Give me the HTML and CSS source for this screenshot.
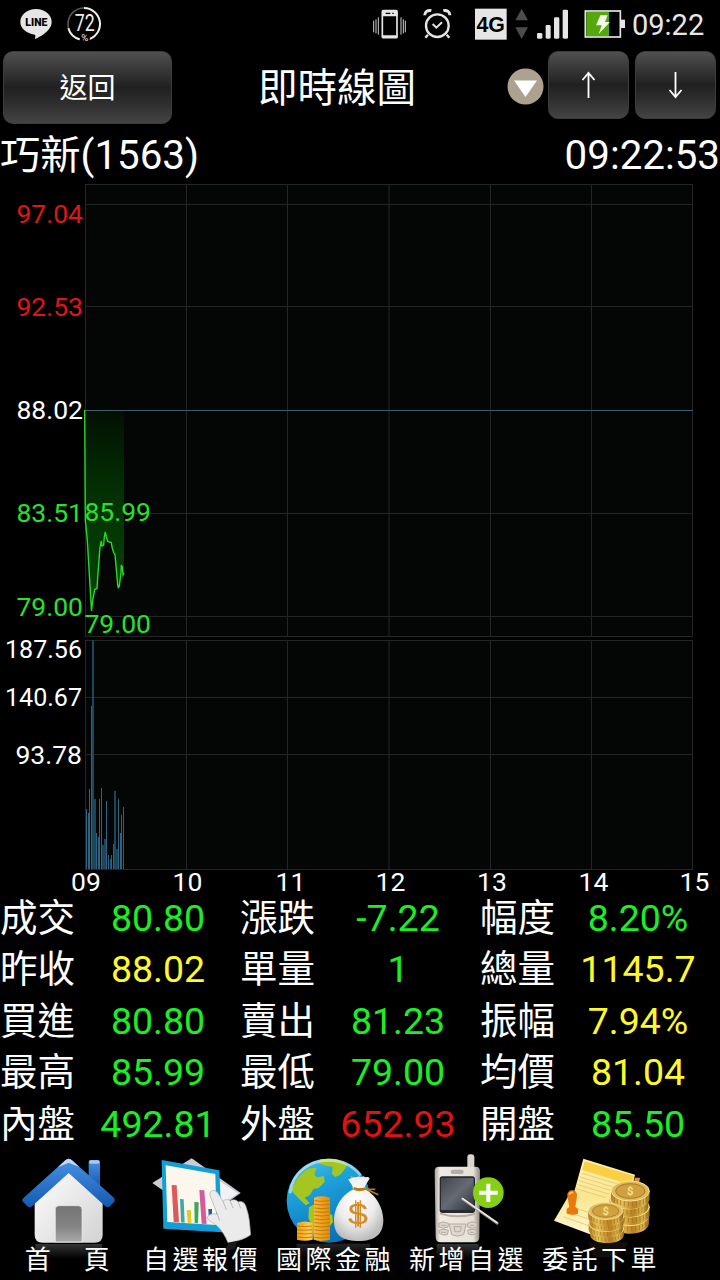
FILE: index.html
```
<!DOCTYPE html>
<html lang="zh-TW">
<head>
  <meta charset="UTF-8">
  <meta name="viewport" content="width=device-width, initial-scale=1.0">
  <title>即時線圖</title>
  <link rel="stylesheet" href="styles.css">
</head>
<body>

  <!-- Status bar -->
  <div class="status-bar">
    <svg class="line-icon" width="32" height="52" viewBox="60 0 96 156">
      <path d="M108 27C82 27 61 44 61 66c0 20 18 34 43 38 3 1 2 5 1 13 14-5 50-25 50-51 0-22-21-39-47-39z" fill="#e6e6e6"/>
      <text x="109" y="79" textLength="66" lengthAdjust="spacingAndGlyphs" class="line-text">LINE</text>
    </svg>
    <svg width="34" height="52" viewBox="201 0 102 156">
      <circle cx="252" cy="72" r="48" fill="none" stroke="#555" stroke-width="5"/>
      <path d="M252 24A48 48 0 0 1 270 116.500M239 118A48 48 0 0 1 205 85" fill="none" stroke="#eee" stroke-width="6"/>
      <rect x="240" y="98" width="28" height="26" fill="#000"/>
      <text x="254" y="94" textLength="60" lengthAdjust="spacingAndGlyphs" class="percent-num">72</text>
      <text x="254" y="122" class="percent-sign">%</text>
    </svg>
    <div class="status-right">
      <svg width="35" height="52" viewBox="36 0 105 156">
        <rect x="67" y="32" width="44" height="81" rx="3" fill="none" stroke="#e6e6e6" stroke-width="5"/>
        <path d="M66 31h46v18H66zM66 106h46v8H66z" fill="#e6e6e6"/>
        <path d="M77 40h14M97 40h4" stroke="#000" stroke-width="4"/>
        <path d="M41 62v35M55 52v52M123 52v52M136 62v35M48 58v42M130 58v42" stroke="#ccc" stroke-width="3"/>
      </svg>
      <svg class="alarm" width="29" height="52" viewBox="189 0 87 156" fill="none" stroke="#e6e6e6">
        <circle cx="232" cy="77" r="34" stroke-width="7"/>
        <path d="M218 72l11 11 17-16" stroke-width="6"/>
        <path d="M194 46c0-10 9-17 20-14M270 46c0-10-9-17-20-14" stroke-width="9"/>
        <path d="M204 104l-8 9M260 104l8 9" stroke-width="7"/>
      </svg>
      <svg class="net" width="34" height="52" viewBox="342 0 102 156">
        <rect x="345" y="26" width="95" height="93" fill="#e6e6e6"/>
        <text x="392" y="96" class="net-text">4G</text>
      </svg>
      <svg class="updown" width="14" height="52" viewBox="465 0 42 156">
        <path d="M485 26l19 35h-38zM485 117l19-35h-38z" fill="#4c4c4c"/>
      </svg>
      <svg class="signal" width="34" height="52" viewBox="528 0 102 156" fill="#e6e6e6">
        <rect x="531" y="99" width="16" height="17" rx="4"/>
        <rect x="557" y="75" width="15" height="41" rx="4"/>
        <rect x="582" y="52" width="16" height="64" rx="4"/>
        <rect x="608" y="29" width="16" height="87" rx="4"/>
      </svg>
      <svg class="battery" width="43" height="52" viewBox="672 0 129 156">
        <rect x="676" y="33" width="105" height="78" fill="#000" stroke="#e6e6e6" stroke-width="5"/>
        <rect x="679" y="36" width="68" height="72" fill="#55a80b"/>
        <rect x="783" y="59" width="12" height="25" fill="#e6e6e6"/>
        <path d="M721 46h22l-8 20h15l-34 36 9-26h-17z" fill="#f4f8ea"/>
      </svg>
      <span class="clock">09:22</span>
    </div>
  </div>

  <!-- Header -->
  <div class="header">
    <button class="btn back">返回</button>
    <h1>即時線圖</h1>
    <svg class="dropdown" width="37" height="37" viewBox="0 0 37 37">
      <circle cx="18.500" cy="18.500" r="18" fill="#ada18f"/>
      <path d="M7 12.500h23L18.500 29z" fill="#fff"/>
    </svg>
    <button class="btn arrow">
      <svg width="16" height="28" viewBox="0 0 16 28"><path d="M7.500 27V2M1.500 9l6-7 6 7"/></svg>
    </button>
    <button class="btn arrow">
      <svg width="16" height="28" viewBox="0 0 16 28"><path d="M7.500 1v25M1.500 19l6 7 6-7"/></svg>
    </button>
  </div>

  <div class="quote">
    <span>巧新(1563)</span>
    <span>09:22:53</span>
  </div>

  <!-- Price and volume chart -->
  <svg class="chart" width="720" height="713" viewBox="0 182 720 713">
    <defs>
      <linearGradient id="drop" gradientUnits="userSpaceOnUse" x1="0" y1="410" x2="0" y2="610">
        <stop offset="0" stop-color="#021002"/>
        <stop offset="0.400" stop-color="#033003"/>
        <stop offset="1" stop-color="#044504"/>
      </linearGradient>
    </defs>
    <rect x="85" y="184" width="608" height="453" fill="#040605"/>
    <rect x="85" y="640" width="608" height="230" fill="#040605"/>
    <path class="grid" d="M85 184.500h608M85 204.500h608M85 306.500h608M85 513.500h608M85 616.500h608M85 636.500h608M85 640.500h608M85 697.500h608M85 754.500h608M85 869.500h608"/>
    <path class="grid" d="M85.500 184v453M186.500 184v453M287.500 184v453M389 184v453M490.500 184v453M591.500 184v453M692.500 184v453"/>
    <path class="grid" d="M85.500 640v230M186.500 640v230M287.500 640v230M389 640v230M490.500 640v230M591.500 640v230M692.500 640v230"/>

    <path d="M85 410L85.300 520 87.300 540 91.500 611 92.700 600 94.700 589.500 97 588.500 98 573 100 547 101.300 541 102 546 103.700 545 104.300 537 105.300 532 106.300 537 107.700 541.500 111.300 542.500 112 547 113.700 552.500 115 555 117.700 585 118.300 587.500 119.300 586.500 120.300 578 121 573 121.300 565 122.300 567 123 575 124 573V410z" fill="url(#drop)"/>
    <path d="M85 410.500h608" stroke="#435f6f"/>
    <path class="price" d="M84.700 410L85.300 520 87.300 540 91.500 611 92.700 600 94.700 589.500 97 588.500 98 573 100 547 101.300 541 102 546 103.700 545 104.300 537 105.300 532 106.300 537 107.700 541.500 111.300 542.500 112 547 113.700 552.500 115 555 117.700 585 118.300 587.500 119.300 586.500 120.300 578 121 573 121.300 565 122.300 567 123 575 124 573"/>

    <path class="bars" d="M86.500 869V809M88.500 869V813M89.500 869V789M91.500 869V706M96.500 869V833M98.500 869V837M99.500 869V799M101.500 869V788M106.500 869V801M108.500 869V855M110.700 869V859M111.500 869V855M113.500 869V844M118.500 869V799M120.500 869V833M121.500 869V815M123.500 869V807"/>
    <path class="bars wide" d="M93 869V640M95 869V799M103 869V845M105 869V839M115 869V791M117 869V849"/>

    <g class="axis">
      <text class="red" x="83" y="222.500">97.04</text>
      <text class="red" x="83" y="315.500">92.53</text>
      <text x="83" y="419">88.02</text>
      <text class="green" x="83" y="522">83.51</text>
      <text class="green" x="83" y="616">79.00</text>
      <text x="82" y="658" textLength="77" lengthAdjust="spacingAndGlyphs">187.56</text>
      <text x="82" y="706" textLength="77" lengthAdjust="spacingAndGlyphs">140.67</text>
      <text x="82" y="764">93.78</text>
      <text class="green" x="151" y="521">85.99</text>
      <text class="green" x="151" y="633">79.00</text>
    </g>
    <g class="hours">
      <text x="86" y="891">09</text>
      <text x="187.500" y="891">10</text>
      <text x="290.500" y="891">11</text>
      <text x="390.500" y="891">12</text>
      <text x="492" y="891">13</text>
      <text x="593.500" y="891">14</text>
      <text x="694.500" y="891">15</text>
    </g>
  </svg>

  <!-- Quote details -->
  <div class="details">
    <div><label>成交</label><span class="green">80.80</span></div>
    <div><label>漲跌</label><span class="green">-7.22</span></div>
    <div><label>幅度</label><span class="green">8.20%</span></div>
    <div><label>昨收</label><span class="yellow">88.02</span></div>
    <div><label>單量</label><span class="green">1</span></div>
    <div><label>總量</label><span class="yellow">1145.7</span></div>
    <div><label>買進</label><span class="green">80.80</span></div>
    <div><label>賣出</label><span class="green">81.23</span></div>
    <div><label>振幅</label><span class="yellow">7.94%</span></div>
    <div><label>最高</label><span class="green">85.99</span></div>
    <div><label>最低</label><span class="green">79.00</span></div>
    <div><label>均價</label><span class="yellow">81.04</span></div>
    <div><label>內盤</label><span class="green">492.81</span></div>
    <div><label>外盤</label><span class="red">652.93</span></div>
    <div><label>開盤</label><span class="green">85.50</span></div>
  </div>

  <!-- Bottom menu -->
  <div class="menu">
    <div class="item">
      <svg width="133" height="94" viewBox="3 15 399 282">
        <defs>
          <linearGradient id="wall" x1="0" y1="0" x2="1" y2="1"><stop offset="0" stop-color="#fff"/><stop offset="1" stop-color="#d2d2d2"/></linearGradient>
          <linearGradient id="roof" x1="0" y1="0" x2="0" y2="1"><stop offset="0" stop-color="#4a92e6"/><stop offset="1" stop-color="#1259b0"/></linearGradient>
          <linearGradient id="door" x1="0" y1="0" x2="0" y2="1"><stop offset="0" stop-color="#747474"/><stop offset="0.600" stop-color="#858585"/><stop offset="1" stop-color="#aaa"/></linearGradient>
          <linearGradient id="shade" x1="0" y1="0" x2="0" y2="1"><stop offset="0" stop-color="#343434"/><stop offset="1" stop-color="#000"/></linearGradient>
        </defs>
        <path d="M106 297h200v45H106z" fill="url(#shade)"/>
        <path d="M266 52q0-7 7-7h20q7 0 7 7v74l-34-30z" fill="url(#roof)"/>
        <path d="M267 52q0-6 6-6h20q6 0 6 6l-4 4h-24z" fill="#a9c9f2"/>
        <path d="M104 160L206 72l102 88v110q0 23-24 23H128q-24 0-24-23z" fill="url(#wall)"/>
        <path d="M206 41q5 0 10 5l124 111q7 7 2 14l-12 13q-7 6-14 0L206 84 96 184q-7 6-14 0l-13-14q-5-6 2-12L196 46q5-5 10-5z" fill="url(#roof)"/>
        <path d="M206 41q5 0 10 5l22 20-32-13-32 14 22-21q5-5 10-5z" fill="#c3d9f5"/>
        <path d="M166 291v-98q0-11 11-11h58q11 0 11 11v98z" fill="url(#door)" stroke="#eee" stroke-width="2"/>
      </svg>
      <span>首　頁</span>
    </div>
    <div class="item">
      <svg width="133" height="94" viewBox="402 15 399 282">
        <path d="M575 40L722 144 612 222 457 114z" fill="#c9ccd4"/>
        <path d="M640 96l74 49-64 42z" fill="#f2f2f5"/>
        <path d="M485 45L658 76 666 262 490 251z" fill="#139fd6"/>
        <path d="M497 61L646 87 650 240 502 231z" fill="#fbf7ec"/>
        <path d="M515 120l15 1 7 111-16-1z" fill="#dd5a58"/>
        <path d="M540 162l11 1 3 70-11-1z" fill="#3aa9a9"/>
        <path d="M560 195l13 1 1 38-11-1z" fill="#e3cb27"/>
        <path d="M583 171l13 1-2 63-10-1z" fill="#38a85b"/>
        <path d="M598 135l15 1 7 101-15-1z" fill="#d45a9e"/>
        <path d="M625 192h11v22h-10z" fill="#245bb0"/>
        <path d="M684 293c34-5 55-14 68-24-3-28-3-54-13-80-3-18-17-23-24-18-6-8-17-8-24-4-8-5-17-4-22 2l-15-24c-10-14-27-10-24 6l22 57c-13-4-27 0-30 10 3 11 17 14 29 24 15 14 24 30 33 51z" fill="#ebebeb" stroke="#aaa" stroke-width="2"/>
        <path d="M669 169l10 25M691 168l8 21M715 172l7 18M652 208l7 19" fill="none" stroke="#bbb" stroke-width="3"/>
        <path d="M684 293l28-5-8 25-28 5z" fill="#191919"/>
      </svg>
      <span>自選報價</span>
    </div>
    <div class="item">
      <svg width="133" height="94" viewBox="-9 15 399 282">
        <defs>
          <linearGradient id="sea" x1="0" y1="0" x2="0.400" y2="1"><stop offset="0" stop-color="#5cc3e6"/><stop offset="0.350" stop-color="#20a5dc"/><stop offset="1" stop-color="#0873ba"/></linearGradient>
          <linearGradient id="gold" x1="0" y1="0" x2="1" y2="0"><stop offset="0" stop-color="#ee9d0c"/><stop offset="0.350" stop-color="#ffc94c"/><stop offset="1" stop-color="#e48a04"/></linearGradient>
          <radialGradient id="sack" cx="0.450" cy="0.350" r="0.650"><stop offset="0" stop-color="#fff"/><stop offset="0.600" stop-color="#ececec"/><stop offset="1" stop-color="#bdbdbd"/></radialGradient>
        </defs>
        <path d="M80 296h220v42H80z" fill="url(#shade)" opacity="0.700"/>
        <circle cx="176" cy="167" r="126" fill="url(#sea)"/>
        <path d="M64 138C74 104 96 80 119 70l20-2-6 21 9 8 20-4 2 18-17 17-17 4-10 18-16 8 15 16-12 7-20-20-16-16-13-17zM150 44c30-6 62-2 82 16l-10 16-12 14-14 6-10-8 2-22-20-4-20-6zM117 187l16-9 28 15 26 18 2 20-20 26-14 31-23-8-8-40-9-21zM242 93l26 9 29 38 2 50-27-18-24-40z" fill="#a5c520"/>
        <path d="M60 145C67 82 118 46 176 46c39 0 73 16 96 45" fill="none" stroke="#e8fbff" stroke-width="9" opacity="0.550"/>
        <path d="M81 234q23-9 47 0v50q-23 6-47 0zM132 158q23-8 48 0v126q-23 6-48 0z" fill="url(#gold)"/>
        <path d="M82 243q22 4 45 0M82 254q22 4 45 0M82 265q22 4 45 0M82 276q22 4 45 0M133 167q23 4 46 0M133 178q23 4 46 0M133 189q23 4 46 0M133 200q23 4 46 0M133 211q23 4 46 0M133 222q23 4 46 0M133 233q23 4 46 0M133 244q23 4 46 0M133 255q23 4 46 0M133 266q23 4 46 0M133 277q23 4 46 0" fill="none" stroke="#b57408" stroke-width="2.500"/>
        <path d="M252 133c-5-15-14-21-17-31 8 0 14-6 24-5 8-6 15 2 22-3 7 6 12-2 18 6-4 10-14 19-16 33 31 12 57 54 57 92 0 46-30 63-73 63-45 0-75-14-75-61 0-41 27-82 60-94z" fill="url(#sack)"/>
        <path d="M251 132q18 8 36 0l38 17M286 132l30 1M252 128q18 7 34 1" fill="none" stroke="#b67b22" stroke-width="5"/>
        <text x="264" y="238" textLength="60" lengthAdjust="spacingAndGlyphs" class="dollar">$</text>
        <path d="M257 166v82M271 166v82" stroke="#d88b25" stroke-width="4"/>
      </svg>
      <span>國際金融</span>
    </div>
    <div class="item">
      <svg width="133" height="94" viewBox="390 15 399 282">
        <defs>
          <linearGradient id="shell" x1="0" y1="0" x2="1" y2="0"><stop offset="0" stop-color="#aaa497"/><stop offset="0.120" stop-color="#efece4"/><stop offset="0.850" stop-color="#e6e1d7"/><stop offset="1" stop-color="#8d8880"/></linearGradient>
          <linearGradient id="screen" x1="0" y1="0" x2="1" y2="1"><stop offset="0" stop-color="#42454c"/><stop offset="0.500" stop-color="#666a74"/><stop offset="1" stop-color="#2c2f36"/></linearGradient>
        </defs>
        <path d="M500 297h126v45H500z" fill="url(#shade)"/>
        <rect x="592" y="28" width="21" height="60" rx="9" fill="#d9d5cc"/>
        <path d="M494 78q0-13 14-13h108q14 0 14 13l-2 197q0 17-16 17H512q-15 0-15-17z" fill="url(#shell)"/>
        <rect x="542" y="74" width="39" height="13" rx="6" fill="#b4afa5"/>
        <rect x="509" y="94" width="106" height="110" rx="8" fill="#28292d"/>
        <rect x="513" y="99" width="98" height="96" rx="3" fill="url(#screen)"/>
        <path d="M510 206q52 16 106 0" fill="none" stroke="#b8afa3" stroke-width="6"/>
        <path d="M506 235q14-9 29 0l-1 11q-14 7-27 0zM592 235q14-9 29 0l-1 11q-14 7-27 0zM507 256q14-7 28 0l-3 13q-14 4-24-4zM593 256q14-7 27 0l-2 10q-13 6-23 1zM537 237h51l-7 32q-19 9-36 0z" fill="#ddd7cc" stroke="#b3aba0" stroke-width="3"/>
        <path d="M552 245h22l-3 15h-16zM514 241h14M600 241h14M514 262h14M600 262h12" fill="none" stroke="#b3aba0" stroke-width="3"/>
        <circle cx="655" cy="143" r="46" fill="#85d016"/>
        <path d="M655 116v55M627 143.500h56" stroke="#fff" stroke-width="12"/>
        <path d="M577 162L682 235" stroke="#8f8a82" stroke-width="8" stroke-linecap="round"/>
        <path d="M578 161L681 233" stroke="#eeebe3" stroke-width="5" stroke-linecap="round"/>
      </svg>
      <span>新增自選</span>
    </div>
    <div class="item">
      <svg width="133" height="94" viewBox="99 15 399 282">
        <defs>
          <linearGradient id="paper" x1="0" y1="0" x2="0" y2="1"><stop offset="0" stop-color="#fff1ad"/><stop offset="0.500" stop-color="#fae691"/><stop offset="1" stop-color="#fff7cf"/></linearGradient>
          <linearGradient id="coin" x1="0" y1="0" x2="1" y2="0"><stop offset="0" stop-color="#b47b1a"/><stop offset="0.250" stop-color="#e9c65c"/><stop offset="0.600" stop-color="#b98222"/><stop offset="0.850" stop-color="#dcb750"/><stop offset="1" stop-color="#8e5f12"/></linearGradient>
          <!-- one coin of a stack: edge, rim and top face -->
          <g id="gold-coin">
            <path d="M-58 0v21c0 44 116 44 116 0V0z" fill="url(#coin)"/>
            <path d="M-48 18v17M-39 23v17M-29 27v17M-18 29v17M-6 30v17M6 30v17M18 29v17M29 27v17M39 23v17M48 18v17" stroke="#a06d1a" stroke-width="2"/>
            <ellipse rx="57" ry="30" fill="#dfba58" stroke="#f6e09a" stroke-width="3"/>
            <ellipse rx="44" ry="22" fill="#cfa141" stroke="#a97b26" stroke-width="3"/>
          </g>
        </defs>
        <path d="M265 292h120q-20 42-60 45h-45z" fill="#120f0a"/>
        <path d="M250 41L405 89 370 240 270 268 162 227 204 155 223 139z" fill="url(#paper)"/>
        <path d="M254 49L402 93 391 119 247 75z" fill="#fbcf43"/>
        <path d="M246 85L360 119M241 96L345 128M238 107L332 136M233 119L326 147M228 131L318 158M213 184l58 20M205 202l64 21M190 215l76 27" stroke="#e1c875" stroke-width="2.500"/>
        <path d="M405 98h15l-3 20h-17z" fill="#dc8a46"/>
        <path d="M202 153c-2-23 31-23 29-1l-5 34 8 6v14q-17 6-34 0v-14l8-6z" fill="#e9790c"/>
        <path d="M208 149q3-9 12-6" fill="none" stroke="#ffc35a" stroke-width="5"/>
        <use href="#gold-coin" transform="translate(389 212)"/>
        <use href="#gold-coin" transform="translate(391 186)"/>
        <use href="#gold-coin" transform="translate(387 162)"/>
        <use href="#gold-coin" transform="translate(391 138)"/>
        <text x="391" y="150" class="coin-text">$</text>
        <use href="#gold-coin" transform="translate(321 252) scale(.88 .78)"/>
        <use href="#gold-coin" transform="translate(317 236) scale(.88 .78)"/>
        <use href="#gold-coin" transform="translate(320 217) scale(.88 .78)"/>
        <use href="#gold-coin" transform="translate(317 198) scale(.9 .85)"/>
        <text x="317" y="209" class="coin-text">$</text>
      </svg>
      <span>委託下單</span>
    </div>
  </div>

</body>
</html>
```
FILE: styles.css
```
* {
  box-sizing: border-box;
}

body {
  margin: 0;
  width: 720px;
  height: 1280px;
  overflow: hidden;
  background-color: #000;
  color: #fff;
  font-family: Roboto, "Noto Sans CJK TC", sans-serif;
}

svg {
  display: block;
  flex: none;
}

/* Status bar */
.status-bar {
  display: flex;
  height: 51px;
  padding-left: 20px;
}

.line-icon {
  margin-right: 15px;
}

.line-text {
  font-size: 34px;
  font-weight: 900;
  text-anchor: middle;
  fill: #000;
}

.percent-num {
  font-size: 72px;
  font-weight: 400;
  text-anchor: middle;
  fill: #eee;
}

.percent-sign {
  font-size: 29px;
  text-anchor: middle;
  fill: #eee;
}

.status-right {
  display: flex;
  margin-left: auto;
  padding-right: 15px;
}

.alarm {
  margin-left: 16px;
}

.net {
  margin-left: 22px;
}

.net-text {
  font-family: "Liberation Sans", sans-serif;
  font-size: 64px;
  font-weight: bold;
  text-anchor: middle;
  fill: #000;
}

.updown,
.signal {
  margin-left: 7px;
}

.battery {
  margin-left: 14px;
}

.clock {
  width: 73px;
  margin-left: 5px;
  font-size: 29px;
  line-height: 50px;
  color: #e6e6e6;
}

/* Header */
.header {
  display: flex;
  height: 79px;
  padding-left: 3px;
}

.btn {
  display: flex;
  align-items: center;
  justify-content: center;
  padding: 0;
  border: 1px solid #3c3c3c;
  border-radius: 10px;
  background: linear-gradient(#505050, #383838 25%, #202020 50%, #303030 75%, #444);
  color: #fff;
  font-family: inherit;
}

.back {
  width: 169px;
  height: 73px;
  padding-bottom: 4px;
  font-size: 28px;
}

.arrow {
  width: 81px;
  height: 68px;
  margin-left: 4px;
}

.arrow + .arrow {
  margin: 0 4px 0 6px;
}

.arrow path {
  fill: none;
  stroke: #fff;
  stroke-width: 1.8;
}

h1 {
  flex: 1;
  margin: 0;
  padding-right: 5px;
  font-size: 39.500px;
  font-weight: normal;
  line-height: 76px;
  text-align: center;
}

.dropdown {
  margin-top: 17px;
}

.quote {
  display: flex;
  justify-content: space-between;
  height: 52px;
  font-size: 40.300px;
  line-height: 52px;
}

/* Chart */
.chart {
  overflow: visible;
}

.grid {
  fill: none;
  stroke: #242626;
}

.price {
  fill: none;
  stroke: #25dc25;
  stroke-width: 1.4;
}

.bars {
  fill: none;
  stroke: #2c6484;
}

.wide {
  stroke: #1b465e;
  stroke-width: 2;
}

.chart text {
  fill: #fff;
  font-size: 26.500px;
}

.axis {
  text-anchor: end;
}

.hours {
  text-anchor: middle;
}

.chart .green {
  fill: #28e228;
}

.chart .red {
  fill: #e01616;
}

/* Details */
.details {
  display: grid;
  grid-template-columns: repeat(3, 240px);
  grid-auto-rows: 51.400px;
  height: 255px;
  font-size: 37.500px;
  line-height: 46px;
}

.details div {
  display: flex;
}

.details label {
  width: 76px;
}

.details span {
  flex: 1;
  text-align: center;
}

.details .green {
  color: #1cee24;
}

.details .yellow {
  color: #fff92a;
}

.details .red {
  color: #e01212;
}

/* Bottom menu */
.menu {
  display: grid;
  grid-template-columns: repeat(5, 133px);
  padding-left: 1px;
}

.item svg {
  overflow: visible;
}

.item span {
  position: relative;
  display: block;
  padding-left: 3px;
  font-size: 26px;
  line-height: 33px;
  letter-spacing: 3.500px;
  text-align: center;
  white-space: nowrap;
}

.dollar {
  font-family: "Liberation Sans", sans-serif;
  font-size: 88px;
  text-anchor: middle;
  fill: #d88b25;
}

.coin-text {
  font-size: 34px;
  font-weight: bold;
  text-anchor: middle;
  fill: #f7df8c;
}
```
